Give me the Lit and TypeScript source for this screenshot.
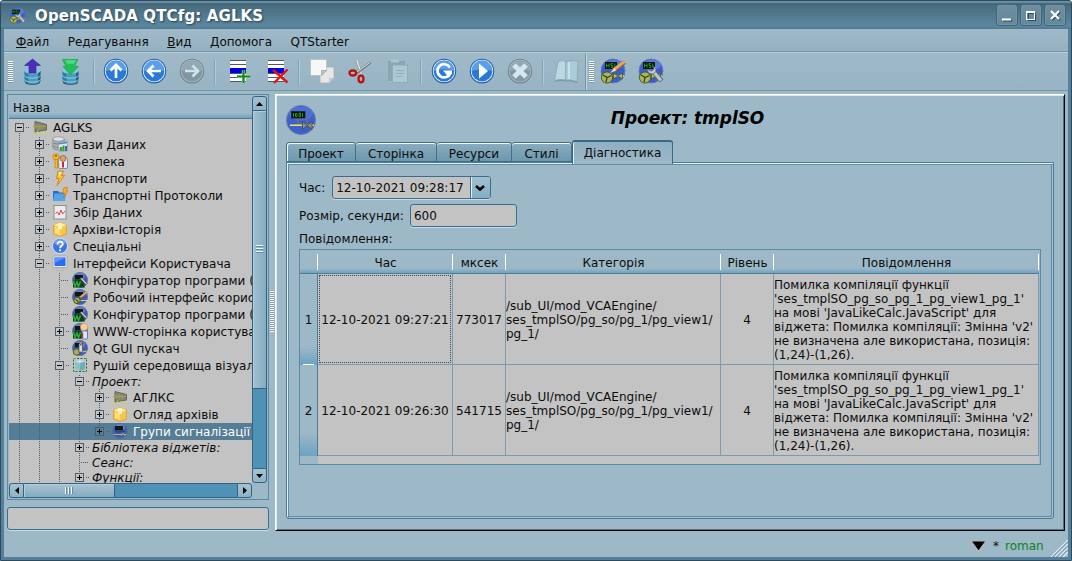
import { LitElement, html, css, svg, nothing } from "lit";
import { customElement, property } from "lit/decorators.js";
import { classMap } from "lit/directives/class-map.js";
import { styleMap } from "lit/directives/style-map.js";

/* ---------- toolbar glyphs, 26x26 ---------- */
const disc = (on: boolean) => svg`
  <circle cx="13" cy="13.600" r="12.200" fill=${on ? "#5c7f9c" : "#7c919c"} opacity=".6"/>
  <circle cx="13" cy="13" r="12.200" fill=${on ? "#1c5cae" : "#70858f"}/>
  <circle cx="13" cy="13" r="11.200" fill=${on ? "#e4f0fc" : "#a9bbc4"}/>
  <circle cx="13" cy="13" r="10.400" fill=${on ? "#2a79d6" : "#8096a1"}/>
  <path d="M2.700 13a10.300 10.300 0 0 1 20.600 0Q13 9.500 2.700 13Z" fill=${on ? "#5b9fe8" : "#93a8b2"}/>`;

const drum = svg`
  <path d="M4.500 13v9.500c0 4.500 16 4.500 16 0V13Z" fill="#4f9cc2"/>
  <path d="M4.500 13v9.500c0 2 2 3 4 3.300V13Z" fill="#2f7ea4"/>
  <path d="M18 13v11.800c1.500-.5 2.500-1.300 2.500-2.300V13Z" fill="#235f80"/>
  <ellipse cx="12.500" cy="13" rx="8" ry="2.800" fill="#84c6e2"/>
  <path d="M4.500 17.500c1 3.500 15 3.500 16 0M4.500 21.500c1 3.500 15 3.500 16 0" stroke="#8ed0e8" fill="none"/>
  <path d="M5 24.500c2 2.400 13 2.400 15 0" stroke="#1c4f6c" fill="none"/>`;

const sheet = svg`
  <rect x="4" y="2" width="16" height="22" fill="#fdfdfd"/>
  <path d="M4 2.500h16M4 6.500h16M4 15.500h16M4 19.500h16M4 23.500h16" stroke="#4c5a62"/>
  <rect x="4" y="10" width="16" height="5" fill="#0000e0"/>`;

const scada = svg`
  <circle cx="13" cy="13" r="12.200" fill="#3c5ccc"/>
  <circle cx="13" cy="13" r="11.800" fill="none" stroke="#6c7ca8" stroke-width=".8"/>
  <ellipse cx="14" cy="7" rx="9" ry="5" fill="#5a7adc"/>
  <rect x="5" y="4" width="12" height="7" fill="#0a140a"/>
  <path d="M6.500 5.500v4M9 5.500v4M6.500 7.500h2.500M11 9.500h1.800v-2H11v-2h1.800M14.800 5.500v4" stroke="#1b9a1b" fill="none"/>
  <path d="M12 18h12" stroke="#dedc4a" stroke-width="1.500"/>
  <path d="M13.500 15l4.500 3-4.500 3zM22.500 15l-4.500 3 4.500 3z" fill="#b4bc5c" stroke="#4b5230" stroke-width=".8"/>
  <circle cx="7" cy="19.500" r="5.600" fill="#a9b65c" stroke="#4c5628"/>
  <path d="M3 17l4 2.500 4.500-2M7 19.500l-1 4.500" stroke="#37401c" stroke-width="1.200" fill="none"/>`;

const toolIcons: Record<string, unknown> = {
  load: svg`${drum}<path d="M9 15V7.500H4.500L12.500 1l8 6.500H16V15Z" fill="#4a30b8" stroke="#34209a" stroke-width=".6"/>`,
  save: svg`${drum}<path d="M4.500 1.500h15.500l-3.500 7h4L12.500 17 5 8.500h3Z" fill="#1fc05a" stroke="#16a04a" stroke-width=".6"/><path d="M7 2.300h11l-2 3.500H9Z" fill="#4fdc7e"/>`,
  up: svg`${disc(true)}<path d="M13 20V7.500M7.500 12.500L13 7l5.500 5.500" stroke="#fff" stroke-width="2.700" fill="none"/>`,
  back: svg`${disc(true)}<path d="M20 13H7.500M12.500 7.500L7 13l5.500 5.500" stroke="#fff" stroke-width="2.700" fill="none"/>`,
  forward: svg`${disc(false)}<path d="M6 13h12.500M13.500 7.500L19 13l-5.500 5.500" stroke="#cfe3ee" stroke-width="2.700" fill="none"/>`,
  add: svg`<g transform="translate(1 0)">${sheet}<path d="M17.500 12v13M11 18.500h13.500" stroke="#c8e0c8" stroke-width="3.400"/><path d="M17.500 12v13M11 18.500h13.500" stroke="#108c1c" stroke-width="2.200"/></g>`,
  remove: svg`<g transform="translate(1 0)">${sheet}<path d="M9 12l14.500 12.500M23.500 11.500L10 25" stroke="#e01414" stroke-width="2.400"/></g>`,
  copy: svg`<path d="M11 9h14v11l-5 5H11Z" fill="#e6e6e4" stroke="#a8adae" stroke-width=".7"/><path d="M20 25v-5h5" fill="#c6caca"/>
    <path d="M1.500 1.500h16v11l-5 5h-11Z" fill="#f7f7f7" stroke="#b4b9ba" stroke-width=".7"/><path d="M12.500 17.500v-5h5Z" fill="#bfc2c2" stroke="#909696" stroke-width=".6"/>`,
  cut: svg`<path d="M9.500 2L15 17" stroke="#8f9799" stroke-width="2.600"/><path d="M9.800 2L14.500 16" stroke="#eef0f0" stroke-width="1.200"/>
    <path d="M23.500 4.500L9 15.500" stroke="#6f787b" stroke-width="2.400"/><path d="M23 4.500L10 14" stroke="#e2e5e6" stroke-width="1"/>
    <ellipse cx="5.800" cy="15" rx="3.300" ry="2.500" fill="none" stroke="#b81414" stroke-width="2.300"/>
    <ellipse cx="14" cy="21" rx="2.500" ry="3.300" fill="none" stroke="#b81414" stroke-width="2.300"/>`,
  paste: svg`<path d="M3 3h17v20H3Z" fill="#8aa6b4"/><path d="M6 1.500h8v3H6Z" fill="#adc4cf"/><path d="M7.500 7h15v17.500h-15Z" fill="#abc8d5" stroke="#90adba"/>
    <path d="M11 12.500h8M11 15.500h8M11 18.500h6" stroke="#93b0be"/>`,
  refresh: svg`${disc(true)}<path d="M18.800 9.500A6.600 6.600 0 1 0 19.300 15" stroke="#fff" stroke-width="2.700" fill="none"/><path d="M12 12.500h9v2.800l-3 4.200Z" fill="#fff"/>`,
  play: svg`${disc(true)}<path d="M10 5.500l9 7.500-9 7.500Z" fill="#fff"/>`,
  stop: svg`${disc(false)}<path d="M7 7l12 12M19 7L7 19" stroke="#d2e6f1" stroke-width="5"/>`,
  book: svg`<path d="M5 3.500Q9 1.500 13 3.500L12.500 22Q7 20.500 1.500 22.500Z" fill="#bdd6e2" stroke="#86a4b4" stroke-width=".8"/><path d="M13 3.500q6-1.500 12-.5l-1 20.500q-6-2-11.500-1.500Z" fill="#aacbd9" stroke="#86a4b4" stroke-width=".8"/><path d="M16 4v17" stroke="#d4e8f1" stroke-width="1.500"/><path d="M2 23.500q6-2 11-.5 5-1 11 1.500" stroke="#7695a4" fill="none"/>`,
  vision: svg`${scada}<path d="M24.500 4L13 13" stroke="#8a5a30" stroke-width="4.400"/><path d="M24.500 3.500L13.500 12" stroke="#dca672" stroke-width="3"/><path d="M14.500 10l-4.500 5 6-2.500Z" fill="#f0e4d0"/>`,
  config: svg`${scada}<path d="M15 13l8.500 10" stroke="#5c666c" stroke-width="5"/><path d="M14.500 12.500l8.500 10" stroke="#bcc4ca" stroke-width="3.200"/><path d="M9.500 11.500c0 4 4.500 5.500 7 3.500s1.500-6-1-6.500l.5 3-2.500 1.500Z" fill="#c4ccd0" stroke="#5c666c" stroke-width=".7"/>`,
};

/* ---------- tree glyphs, 16x16 ---------- */
const ball = svg`<circle cx="8" cy="8" r="7.700" fill="#3d5bb8"/><circle cx="8" cy="8" r="7.400" fill="none" stroke="#62719c" stroke-width=".8"/><ellipse cx="8" cy="4.500" rx="5" ry="3.500" fill="#6780cc"/><rect x="3" y="3" width="8" height="4.500" fill="#0d1a10"/>`;
const qtcfg = svg`${ball}<path d="M1 8v7.500h12l-2-6-4-2Z" fill="#11401a"/><path d="M1.500 8.500l1.500 6 2-4.500 1.500 4.500 2-5" stroke="#2fae3c" stroke-width="1.500" fill="none"/><path d="M9 6.500l5.500 6" stroke="#3c4448" stroke-width="3.200"/><path d="M9 6l5.500 6" stroke="#c4cacc" stroke-width="1.600"/>`;
const beacon = svg`<path d="M3 2.500L14.500 5.500v5.500L3 13Z" fill="#84847a" stroke="#66665c"/><path d="M1 7.500h13M4 5.500v4M7 5.500v4.500M10 6v4" stroke="#a8a044" stroke-width="1"/><path d="M0 14.500h4.500l1.500-3M9 12l1.500 2.500H16" stroke="#d4d04e" fill="none"/>`;
const box = svg`<path d="M1.500 4L8 1.500 14.500 4v9L8 15.500 1.500 13Z" fill="#f8c44c" stroke="#e09c28" stroke-width=".8"/><path d="M1.500 4L8 6.500 14.500 4 8 1.500Z" fill="#fdeaa0"/><path d="M6 2.500h4V8H6Z" fill="#fff3b8"/><path d="M3 6l5 2v6l-5-2Z" fill="#fde07c"/>`;

const treeIcons: Record<string, unknown> = {
  beacon,
  box,
  db: svg`<path d="M.8 3v9c0 2.500 11.500 3 11.500 0V3Z" fill="#aab0b1" stroke="#7e8688" stroke-width=".7"/><ellipse cx="6.500" cy="3" rx="5.700" ry="2.200" fill="#dfe3e3" stroke="#858c8e" stroke-width=".7"/><path d="M1 6.500c1 2 10 2 11.200 0M1 10c1 1 3 1.500 5 1.500" stroke="#7e8688" fill="none"/>
    <path d="M6 6.500l9.500-1.500v10l-8 .8Z" fill="#dce6e8" stroke="#8a9a9c" stroke-width=".7"/><path d="M6.500 7.800L15 6.500" stroke="#4e86c4" stroke-width="1.600"/><path d="M8 15v-4h2.200v4M10.500 15V9.500h2V15" fill="#3c9c44"/><path d="M13 15v-5h2v5Z" fill="#3468b8"/>`,
  security: svg`<rect x="6.500" y="5" width="9" height="10.500" rx="1.500" fill="#e8eef8" stroke="#5878b8" stroke-width=".8"/><circle cx="11" cy="5.500" r="3" fill="#d9a070" stroke="#7a4a28" stroke-width=".6"/><path d="M10 9h2v5l-1 1-1-1Z" fill="#d02828"/>
    <circle cx="4" cy="4" r="3.200" fill="#f6b828" stroke="#b87810" stroke-width=".7"/><path d="M3 6.500h2.500v8.500H3Z" fill="#f6b828" stroke="#b87810" stroke-width=".6"/><circle cx="4" cy="3" r=".9" fill="#7c5410"/><path d="M5.500 10.500h2M5.500 13h2" stroke="#d89418" stroke-width="1.300"/>`,
  bolt: svg`<path d="M6 1h5.500L9.500 5.500h3L5 15.500l2-7H4.500Z" fill="#fcc22c" stroke="#c87818" stroke-width=".8"/><path d="M7 2h2.500L7 7Z" fill="#fff4b4"/>`,
  protocol: svg`<path d="M1 4h5l1.500 1.500H13V14H1Z" fill="#2870cc"/><path d="M1 14L2.500 6.500H14L13 14Z" fill="#56a4ee"/><path d="M12 .5h3.500L14.200 4H16l-4.500 7 1.200-5H10.500Z" fill="#fcae24" stroke="#c87010" stroke-width=".6"/>`,
  chart: svg`<rect x="2" y="1.500" width="12" height="13.500" fill="#ececec" stroke="#8c9294"/><path d="M3.500 9.500L5.500 8 7 11l2-5 1.500 4L13 7" stroke="#d84848" fill="none"/>`,
  help: svg`<circle cx="8" cy="8" r="7.500" fill="#3c74e4" stroke="#dce8fa" stroke-width=".9"/><ellipse cx="8" cy="4.500" rx="5.500" ry="3.500" fill="#6a9af4"/><path d="M5.500 6.200c0-3.400 5.200-3.400 5.200 0 0 2-2.600 1.800-2.600 4M8.100 11.500v1.700" stroke="#fff" stroke-width="1.800" fill="none"/>`,
  monitor: svg`<rect x="1" y="1" width="14" height="11.500" rx="1" fill="#e8ecee" stroke="#9aa2a6" stroke-width=".8"/><rect x="2.500" y="2.500" width="11" height="8.500" fill="#2c6cf0"/><path d="M2.500 2.500h11L2.500 8Z" fill="#5c96fa"/><path d="M6 12.500h4V14H6zM4.500 14h7v1.500h-7Z" fill="#dadedf" stroke="#9aa2a6" stroke-width=".5"/>`,
  qtcfg,
  vision: svg`${ball}<path d="M8 11.500h7" stroke="#dcd84a"/><circle cx="5" cy="11.500" r="3.200" fill="#a9ad5c" stroke="#4f5728"/><path d="M3.500 10.500l2.500 1.500v2" stroke="#303818" fill="none"/><path d="M15 3.500L8 9" stroke="#8c5c34" stroke-width="2.800"/><path d="M15 3L8.500 8" stroke="#dcae78" stroke-width="1.700"/>`,
  www: svg`${qtcfg}<rect x="10" y="8" width="5.500" height="8" rx="1" fill="#dce8fa" stroke="#3c68c0" stroke-width=".8"/><path d="M10.500 10v5" stroke="#d02828" stroke-width="1.500"/><circle cx="12" cy="4" r="3.600" fill="#f6cf98" stroke="#d09450" stroke-width=".6"/>`,
  starter: svg`${ball}<circle cx="4.500" cy="12" r="3.200" fill="#a9ad5c" stroke="#4f5728"/><path d="M7 12V4.500L8.800 1l1.700 3.500V12Z" fill="#d8dcde" stroke="#4c5456" stroke-width=".7"/><path d="M8 3.500h1.500v2H8Z" fill="#d02828"/><path d="M10.500 12l4-1" stroke="#dcd84a" stroke-width="1.200"/>`,
  engine: svg`<rect x="1.500" y="1.500" width="13" height="13" fill="none" stroke="#4a544c" stroke-dasharray="2 1.500"/><path d="M3 4.500L8 3l5 1.500v7.500L8 14l-5-2Z" fill="#86c4c8"/><path d="M3 4.500L8 6l5-1.500L8 3Z" fill="#c4e8ea"/><path d="M8 6v8l5-2V4.500Z" fill="#6cb0b6"/><path d="M1 1h2v1H1zM13 1h2v1h-2zM1 14h2v1H1zM13 14h2v1h-2z" fill="#2fc83c"/>`,
  scheme: svg`${ball}<path d="M1.500 11.500h13" stroke="#b4b454"/><path d="M9 9l4 4M13 9l-4 4" stroke="#8a927c"/><rect x="4" y="7.500" width="9" height="2" fill="#2a4a70"/>`,
};

/* Page emblem, 30x30 */
const emblem = svg`
  <circle cx="15" cy="15" r="14.600" fill="#3c60cc" stroke="#7480a4" stroke-width=".9"/>
  <ellipse cx="15" cy="8.500" rx="12" ry="7" fill="#5478dc" opacity=".7"/>
  <path d="M12 12v7M9.500 19h5M21 10v8" stroke="#6f6f78" stroke-width="1.500"/>
  <rect x="5.500" y="6.500" width="13.500" height="6.500" fill="#060c06" stroke="#20242c" stroke-width=".8"/>
  <path d="M7.500 8v4M9.500 8.500h1.500v3H9.500zM13 8h1.500v3.500H13zM16.500 8v4" stroke="#2aa42a" fill="none" stroke-width=".9"/>
  <path d="M4 20.300h24" stroke="#e8e460" stroke-width="1.600"/>
  <path d="M16.500 16.500l9.500 8v-8l-9.500 8Z" fill="#8d9080" stroke="#44483c" stroke-width=".8"/>`;

interface Node {
  depth: number;
  text: string;
  icon?: string;
  box?: "+" | "-";
  /** depths whose guide line runs through this row */
  lines: number[];
  italic?: boolean;
  selected?: boolean;
  last?: boolean;
}

const NODES: Node[] = [
  { depth: 0, text: "AGLKS", icon: "beacon", box: "-", lines: [] },
  { depth: 1, text: "Бази Даних", icon: "db", box: "+", lines: [0] },
  { depth: 1, text: "Безпека", icon: "security", box: "+", lines: [0] },
  { depth: 1, text: "Транспорти", icon: "bolt", box: "+", lines: [0] },
  { depth: 1, text: "Транспортні Протоколи", icon: "protocol", box: "+", lines: [0] },
  { depth: 1, text: "Збір Даних", icon: "chart", box: "+", lines: [0] },
  { depth: 1, text: "Архіви-Історія", icon: "box", box: "+", lines: [0] },
  { depth: 1, text: "Спеціальні", icon: "help", box: "+", lines: [0] },
  { depth: 1, text: "Інтерфейси Користувача", icon: "monitor", box: "-", lines: [0] },
  { depth: 2, text: "Конфігуратор програми (", icon: "qtcfg", lines: [0, 1] },
  { depth: 2, text: "Робочий інтерфейс корис", icon: "vision", lines: [0, 1] },
  { depth: 2, text: "Конфігуратор програми (", icon: "qtcfg", lines: [0, 1] },
  { depth: 2, text: "WWW-сторінка користува", icon: "www", box: "+", lines: [0, 1] },
  { depth: 2, text: "Qt GUI пускач", icon: "starter", lines: [0, 1] },
  { depth: 2, text: "Рушій середовища візуал", icon: "engine", box: "-", lines: [0, 1] },
  { depth: 3, text: "Проект:", box: "-", lines: [0, 1, 2], italic: true },
  { depth: 4, text: "АГЛКС", icon: "beacon", box: "+", lines: [0, 1, 2, 3] },
  { depth: 4, text: "Огляд архівів", icon: "box", box: "+", lines: [0, 1, 2, 3] },
  { depth: 4, text: "Групи сигналізації", icon: "scheme", box: "+", lines: [0, 1, 2, 3], selected: true, last: true },
  { depth: 3, text: "Бібліотека віджетів:", box: "+", lines: [0, 1, 2], italic: true },
  { depth: 3, text: "Сеанс:", lines: [0, 1, 2], italic: true },
  { depth: 3, text: "Функції:", box: "+", lines: [0, 1, 2], italic: true },
];

@customElement("nav-tree")
class NavTree extends LitElement {
  static styles = css`
    :host { display: flex; flex-direction: column; width: 258px; height: 402px; padding: 1px; border: 1px solid #5c8aa2; }
    .upper { display: flex; height: 387px; }
    .view { width: 243px; display: flex; flex-direction: column; overflow: hidden; }
    .head { height: 22px; flex: none; padding-left: 4px; line-height: 25px; border-bottom: 1px solid #4e7c94;
      background: linear-gradient(#9fb9c8 0 17px, #8db1c6 19px, #6ba3c2 22px); }
    .rows { flex: 1; overflow: hidden; background: #c3c3c3; }
    .row { display: flex; height: 17px; line-height: 19px; white-space: nowrap; }
    .row.it { height: 15px; line-height: 17px; font-style: italic; }
    .row.sel { background: #557d96; color: #fff; }
    .cell { width: 20px; flex: none; display: grid; grid-template-columns: 10px 1px 9px; grid-template-rows: 100%; }
    .cell svg { grid-column: 1 / 4; grid-row: 1; }
    .ico { width: 16px; height: 16px; margin: 0 5px 0 3px; flex: none; overflow: visible; }
    .it .txt { padding-left: 3px; }
    .vbar { width: 15px; display: flex; flex-direction: column; }
    .hbar { display: flex; width: 243px; height: 15px; }
    .arrow, .thumb, .groove { box-sizing: border-box; border: 1px solid #2f6482; display: flex; align-items: center; justify-content: center; }
    .arrow { width: 15px; height: 15px; flex: none; background: linear-gradient(#a6c2d1, #8fb3c5); }
    .thumb { box-shadow: inset 1px 1px #b3cddb; }
    .vbar .thumb { height: 278px; border-top: 0; background: linear-gradient(90deg, #a3c0cf, #84abc0); }
    .vbar .groove { flex: 1; background: #4f92b6; border-top: 0; border-bottom: 0; }
    .hbar .thumb { width: 91px; border-left: 0; background: linear-gradient(#a6c3d2, #84abc0); }
    .hbar .groove { flex: 1; background: #4f92b6; border-left: 0; border-right: 0; }
    .a1 { border-radius: 3px 3px 0 0; } .a2 { border-radius: 0 0 3px 3px; }
    .a3 { border-radius: 3px 0 0 3px; } .a4 { border-radius: 0 3px 3px 0; }
  `;

  private guide(n: Node, d: number, h: number, top: number) {
    const own = d === n.depth;
    const through = n.lines.includes(d);
    if (!own && !through) return html`<span class="cell"></span>`;
    const c = h === 17 ? 8 : 7;
    const ink = "#4d5c64";
    const start = own && n.depth === 0 ? c : top % 2;
    const end = own && n.last ? c : h;
    return html`<span class="cell"><svg width="20" height=${h} shape-rendering="crispEdges">
      <path d="M10.500 ${start}V${end}" stroke=${ink} stroke-dasharray="1 1"/>
      ${own ? svg`<path d="M${n.box ? 17 : 12} ${c + 0.5}H20" stroke=${ink} stroke-dasharray="1 1"/>` : nothing}
      ${own && n.box
        ? svg`<rect x="6.500" y=${c - 3.5} width="8" height="8" fill=${n.selected ? "#557d96" : "#c3c3c3"} stroke="#4b606c"/>
          <path d="M8 ${c + 0.5}h5${n.box === "+" ? `M10.500 ${c - 2}v5` : ""}" stroke="#000"/>`
        : nothing}
    </svg></span>`;
  }

  render() {
    let top = 0;
    return html`
      <div class="upper">
        <div class="view">
          <div class="head">Назва</div>
          <div class="rows">
            ${NODES.map((n) => {
              const h = n.italic ? 15 : 17;
              const at = top;
              top += h;
              return html`<div class=${classMap({ row: true, it: !!n.italic, sel: !!n.selected })}>
                ${Array.from({ length: n.depth + 1 }, (_, d) => this.guide(n, d, h, at))}
                ${n.icon ? html`<svg class="ico" viewBox="0 0 16 16">${treeIcons[n.icon]}</svg>` : nothing}
                <span class="txt">${n.text}</span>
              </div>`;
            })}
          </div>
        </div>
        <div class="vbar">
          <div class="arrow a1"><svg width="7" height="4"><path d="M0 4l3.500-4L7 4Z"/></svg></div>
          <div class="thumb"><svg width="7" height="9" shape-rendering="crispEdges"><path d="M0 .5h7M0 3.500h7M0 6.500h7" stroke="#fff"/><path d="M0 1.500h7M0 4.500h7M0 7.500h7" stroke="#4f92b6"/></svg></div>
          <div class="groove"></div>
          <div class="arrow a2"><svg width="7" height="4"><path d="M0 0l3.500 4L7 0Z"/></svg></div>
        </div>
      </div>
      <div class="hbar">
        <div class="arrow a3"><svg width="4" height="7"><path d="M4 0L0 3.500 4 7Z"/></svg></div>
        <div class="thumb"><svg width="9" height="7" shape-rendering="crispEdges"><path d="M.5 0v7M3.500 0v7M6.500 0v7" stroke="#fff"/><path d="M1.500 0v7M4.500 0v7M7.500 0v7" stroke="#4f92b6"/></svg></div>
        <div class="groove"></div>
        <div class="arrow a4"><svg width="4" height="7"><path d="M0 0l4 3.500L0 7Z"/></svg></div>
      </div>`;
  }
}

const MESSAGE = [
  "Помилка компіляції функції",
  "'ses_tmplSO_pg_so_pg_1_pg_view1_pg_1'",
  "на мові 'JavaLikeCalc.JavaScript' для",
  "віджета: Помилка компіляції: Змінна 'v2'",
  "не визначена але використана, позиція:",
  "(1,24)-(1,26).",
].join("\n");
const CATEGORY = ["/sub_UI/mod_VCAEngine/", "ses_tmplSO/pg_so/pg_1/pg_view1/", "pg_1/"].join("\n");

@customElement("message-table")
class MessageTable extends LitElement {
  @property({ attribute: false }) rows = [
    { time: "12-10-2021 09:27:21", us: "773017" },
    { time: "12-10-2021 09:26:30", us: "541715" },
  ];

  static styles = css`
    :host { display: block; box-sizing: border-box; width: 742px; height: 216px; border: 1px solid #5c8aa2; }
    .grid { display: grid; grid-template-columns: 18px 135px 53px 215px 53px 265px; grid-template-rows: 24px 91px 91px 8px; }
    .h, .n, .c { box-sizing: border-box; display: flex; align-items: center; justify-content: center; line-height: 14px; white-space: pre; }
    .h { padding-top: 2px; border-bottom: 1px solid #4e7c94;
      background: linear-gradient(#fff, #fff) right 4px / 1px 16px no-repeat, linear-gradient(transparent 0 18px, #8db1c6 20px, #6ba3c2 23px); }
    .n { border-right: 1px solid #4e7c94; padding-top: 1px; background: linear-gradient(#9db8c7 0 75%, #6ba3c2); }
    .n.first { background: linear-gradient(#fff, #fff) 3px 100% / 11px 1px no-repeat, linear-gradient(#9db8c7 0 80%, #6ba3c2); }
    .c { padding-top: 2px; background: #c3c3c3; border: solid #7b9cad; border-width: 0 1px 1px 0; }
    .c.f { padding-top: 0; }
    .c.left { justify-content: flex-start; }
    .focus { flex: 1; align-self: stretch; margin: 1px; padding-top: 2px; border: 1px dotted #2c4c5e; display: flex; align-items: center; justify-content: center; }
    .foot { grid-column: 2 / 7; background: #c3c3c3; }
  `;

  render() {
    return html`<div class="grid">
      ${["", "Час", "мксек", "Категорія", "Рівень", "Повідомлення"].map((t) => html`<div class="h">${t}</div>`)}
      ${this.rows.map(
        (r, i) => html`
          <div class=${classMap({ n: true, first: i === 0 })}>${i + 1}</div>
          <div class=${classMap({ c: true, f: i === 0 })}>${i === 0 ? html`<span class="focus">${r.time}</span>` : r.time}</div>
          <div class="c">${r.us}</div>
          <div class="c left">${CATEGORY}</div>
          <div class="c">4</div>
          <div class="c left">${MESSAGE}</div>`,
      )}
      <div class="foot"></div>
    </div>`;
  }
}

const TABS = [
  { t: "Проект", w: 70 },
  { t: "Сторінка", w: 81 },
  { t: "Ресурси", w: 75 },
  { t: "Стилі", w: 60 },
];

@customElement("app-root")
class AppRoot extends LitElement {
  static styles = css`
    :host { display: block; font: 12px "DejaVu Sans", sans-serif; color: #0c0c0c; }
    .win { box-sizing: border-box; width: 1072px; height: 561px; display: flex; flex-direction: column; overflow: hidden;
      background: #9db8c7; border: 1px solid #2f4a59; box-shadow: inset 0 0 0 3px #54809a; border-radius: 3px 3px 0 0; }
    .title { box-sizing: border-box; height: 28px; flex: none; display: flex; align-items: center; padding: 1px 3px 0 8px;
      background: linear-gradient(#6a93a8 0 1px, #3f6175 3px, #4a6d80 5px, #5b869d 24px, #54809a); border-bottom: 1px solid #4e7990; }
    .title svg.app { width: 17px; height: 17px; margin-right: 9px; }
    .cap { flex: 1; padding-top: 1px; font: bold 15px "DejaVu Sans", sans-serif; letter-spacing: .13px; color: #fff; text-shadow: 1px 1px 2px #23404f; }
    .wb { box-sizing: border-box; width: 22px; height: 22px; margin-right: 2px; border: 1px solid #3f6679; border-radius: 3px; background: linear-gradient(#6e8d9d, #64899c); box-shadow: inset 0 0 0 1px #6f95a8; }
    .body { flex: 1; margin: 0 3px 3px; display: flex; flex-direction: column; min-height: 0; }
    .menu { box-sizing: border-box; height: 23px; display: flex; gap: 18.5px; padding-left: 12px; line-height: 27px; border-bottom: 1px solid #7396a8; background: linear-gradient(#9fb9c8, #96b2c1); }
    .tools { box-sizing: border-box; height: 39px; display: flex; align-items: stretch; padding-left: 4px; border-top: 1px solid #b8d0dc; border-bottom: 1px solid #7396a8; background: linear-gradient(#9fb9c8, #98b4c4); }
    .btn { width: 38px; flex: none; display: flex; align-items: center; justify-content: center; }
    .btn svg { width: 26px; height: 26px; overflow: visible; margin-bottom: 1px; }
    .grip { width: 5px; height: 22px; align-self: center; background: repeating-linear-gradient(#fff 0 1px, #7c9cac 1px 2px); }
    .grip.lead { margin-right: 1px; }
    .sep { width: 8px; display: flex; justify-content: center; align-items: center; }
    .sep.tight { width: 7px; }
    .sep i { width: 1px; height: 26px; background: #7fa3b6; border-right: 1px solid #b4ccd8; }
    .split { width: 4px; display: flex; }
    .split i { width: 1px; background: #7396a8; border-right: 1px solid #c0d6e2; }
    .main { display: flex; height: 437px; padding: 3px 3px 0; }
    .side { width: 262px; display: flex; flex-direction: column; justify-content: space-between; }
    .line { box-sizing: border-box; background: #c3c3c3; border: 1px solid #3b6e8b; border-radius: 3px; box-shadow: 0 1px #c9dbe4; }
    .side .line { height: 23px; margin-bottom: 1px; }
    .handle { width: 6px; display: flex; align-items: flex-start; justify-content: center; }
    .handle i { width: 4px; height: 41px; margin-top: 197px; background: repeating-linear-gradient(#fff 0 1px, #7c9cac 1px 2px); }
    .frame { box-sizing: border-box; width: 790px; border: solid; border-width: 1px; border-color: #fff #000 #000 #fff; box-shadow: inset 1px 1px #dfeaf0, inset -1px -1px #55707f; padding: 10px; }
    .top { height: 30px; display: flex; }
    .top h1 { flex: 1; margin: 0 0 0 5px; text-align: center; font: italic bold 17px/27px "DejaVu Sans", sans-serif; letter-spacing: -.05px; color: #000; }
    .tabs { display: flex; align-items: flex-end; height: 22px; margin-top: 5px; }
    .tab { box-sizing: border-box; height: 20px; line-height: 22px; text-align: center; border: 1px solid #426f88; border-left: 0; border-radius: 3px 3px 0 0;
      background: linear-gradient(#8cadbf, #6c98ae); box-shadow: inset 0 1px #f4fafc; }
    .tab.one { border-left: 1px solid #426f88; box-shadow: inset 1px 1px #f4fafc; }
    .tab.on { position: relative; width: 101px; height: 23px; margin-bottom: -2px; height: 24px; line-height: 22px; border: 1px solid #3b6a85; border-top-width: 2px; border-bottom: 0; background: linear-gradient(#8fb0c3, #9db8c7); box-shadow: inset 1px 0 #e4eff4; }
    .pane { box-sizing: border-box; width: 768px; height: 357px; border: 1px solid #4a7b97; border-radius: 0 0 3px 3px; box-shadow: inset 1px 1px #e6f0f5, inset 2px 2px #5f8fa8, inset -1px -1px #a6c2d0, inset -2px -2px #5f8fa8; padding: 13px 0 0 12px; }
    .f { display: flex; align-items: center; }
    .f1 { height: 23px; } .f2 { height: 23px; margin-top: 5px; } .f3 { box-sizing: border-box; height: 22px; padding-top: 1px; }
    .combo { width: 159px; height: 23px; margin-left: 7px; display: flex; overflow: hidden; align-items: center; }
    .combo span { flex: 1; padding-left: 3px; }
    .drop { width: 19px; height: 21px; border-left: 1px solid #3b6e8b; box-shadow: inset 1px 0 #e6f0f5; background: linear-gradient(#a3c0cf, #82aec6); display: flex; align-items: center; justify-content: center; }
    .drop svg { margin: 2px 1px 0 0; }
    .num { width: 107px; height: 23px; margin-left: 6px; padding-left: 3px; line-height: 22px; }
    .status { flex: 1; display: flex; align-items: center; padding: 3px 0 0 966px; }
    .status b { font-weight: normal; margin: 0 6px 0 6px; }
    .who { color: #0a8420; flex: 1; }
    .size { align-self: flex-end; display: block; }
  `;

  private tool(name: string) {
    return html`<span class="btn"><svg viewBox="0 0 26 26">${toolIcons[name]}</svg></span>`;
  }

  render() {
    const sep = html`<span class="sep"><i></i></span>`;
    return html`<div class="win">
      <div class="title">
        <svg class="app" viewBox="0 0 26 26">${toolIcons.config}</svg>
        <span class="cap">OpenSCADA QTCfg: AGLKS</span>
        <span class="wb"><svg width="20" height="20"><path d="M6 15.500h9" stroke="#2c4a58" stroke-width="2"/><path d="M5 14.500h9" stroke="#fff" stroke-width="2"/></svg></span>
        <span class="wb"><svg width="20" height="20" shape-rendering="crispEdges"><path d="M7.500 8.500h7v7h-7Z" fill="none" stroke="#2c4a58"/><path d="M5.500 7.500h8v7h-8Z" fill="none" stroke="#fff"/><path d="M5 7h9" stroke="#fff" stroke-width="2"/></svg></span>
        <span class="wb"><svg width="20" height="20"><path d="M7 7l8 8M15 7l-8 8" stroke="#2c4a58" stroke-width="2"/><path d="M6 6l8 8M14 6l-8 8" stroke="#fff" stroke-width="2.200"/></svg></span>
      </div>
      <div class="body">
        <div class="menu"><span><u>Ф</u>айл</span><span>Редагування</span><span><u>В</u>ид</span><span><u>Д</u>опомога</span><span>QTStarter</span></div>
        <div class="tools">
          <span class="grip lead"></span>
          ${["load", "save"].map((n) => this.tool(n))}<span class="sep tight"><i></i></span>
          ${["up", "back", "forward"].map((n) => this.tool(n))}${sep}
          ${["add", "remove"].map((n) => this.tool(n))}${sep}
          ${["copy", "cut", "paste"].map((n) => this.tool(n))}${sep}
          ${["refresh", "play", "stop"].map((n) => this.tool(n))}${sep}
          ${this.tool("book")}
          <span class="split"><i></i></span>
          <span class="grip"></span>
          ${["vision", "config"].map((n) => this.tool(n))}
        </div>
        <div class="main">
          <div class="side"><nav-tree></nav-tree><div class="line"></div></div>
          <div class="handle"><i></i></div>
          <div class="frame">
            <div class="top"><svg width="30" height="30">${emblem}</svg><h1>Проект: tmplSO</h1></div>
            <div class="tabs">
              ${TABS.map((t, i) => html`<span class=${classMap({ tab: true, one: i === 0 })} style=${styleMap({ width: t.w + "px" })}>${t.t}</span>`)}
              <span class="tab on">Діагностика</span>
            </div>
            <div class="pane">
              <div class="f f1">Час:<div class="line combo"><span>12-10-2021 09:28:17</span><div class="drop"><svg width="10" height="7"><path d="M1 1l4 3.500L9 1" fill="none" stroke="#000" stroke-width="2.500"/></svg></div></div></div>
              <div class="f f2">Розмір, секунди:<div class="line num">600</div></div>
              <div class="f f3">Повідомлення:</div>
              <message-table></message-table>
            </div>
          </div>
        </div>
        <div class="status">
          <svg width="17" height="12"><path d="M1 1h15L8.500 11Z" fill="#000" stroke="#b9b4b4" stroke-width="1.200"/></svg>
          <b>*</b><span class="who">roman</span>
          <svg class="size" width="17" height="17"><path d="M0 17L17 0M4 17L17 4M8 17l9-9M12 17l5-5" stroke="#e4eef3" stroke-width="1.200"/><path d="M1.500 17L17 1.500M5.500 17L17 5.500M9.500 17L17 9.500" stroke="#6f95a8"/></svg>
        </div>
      </div>
    </div>`;
  }
}
